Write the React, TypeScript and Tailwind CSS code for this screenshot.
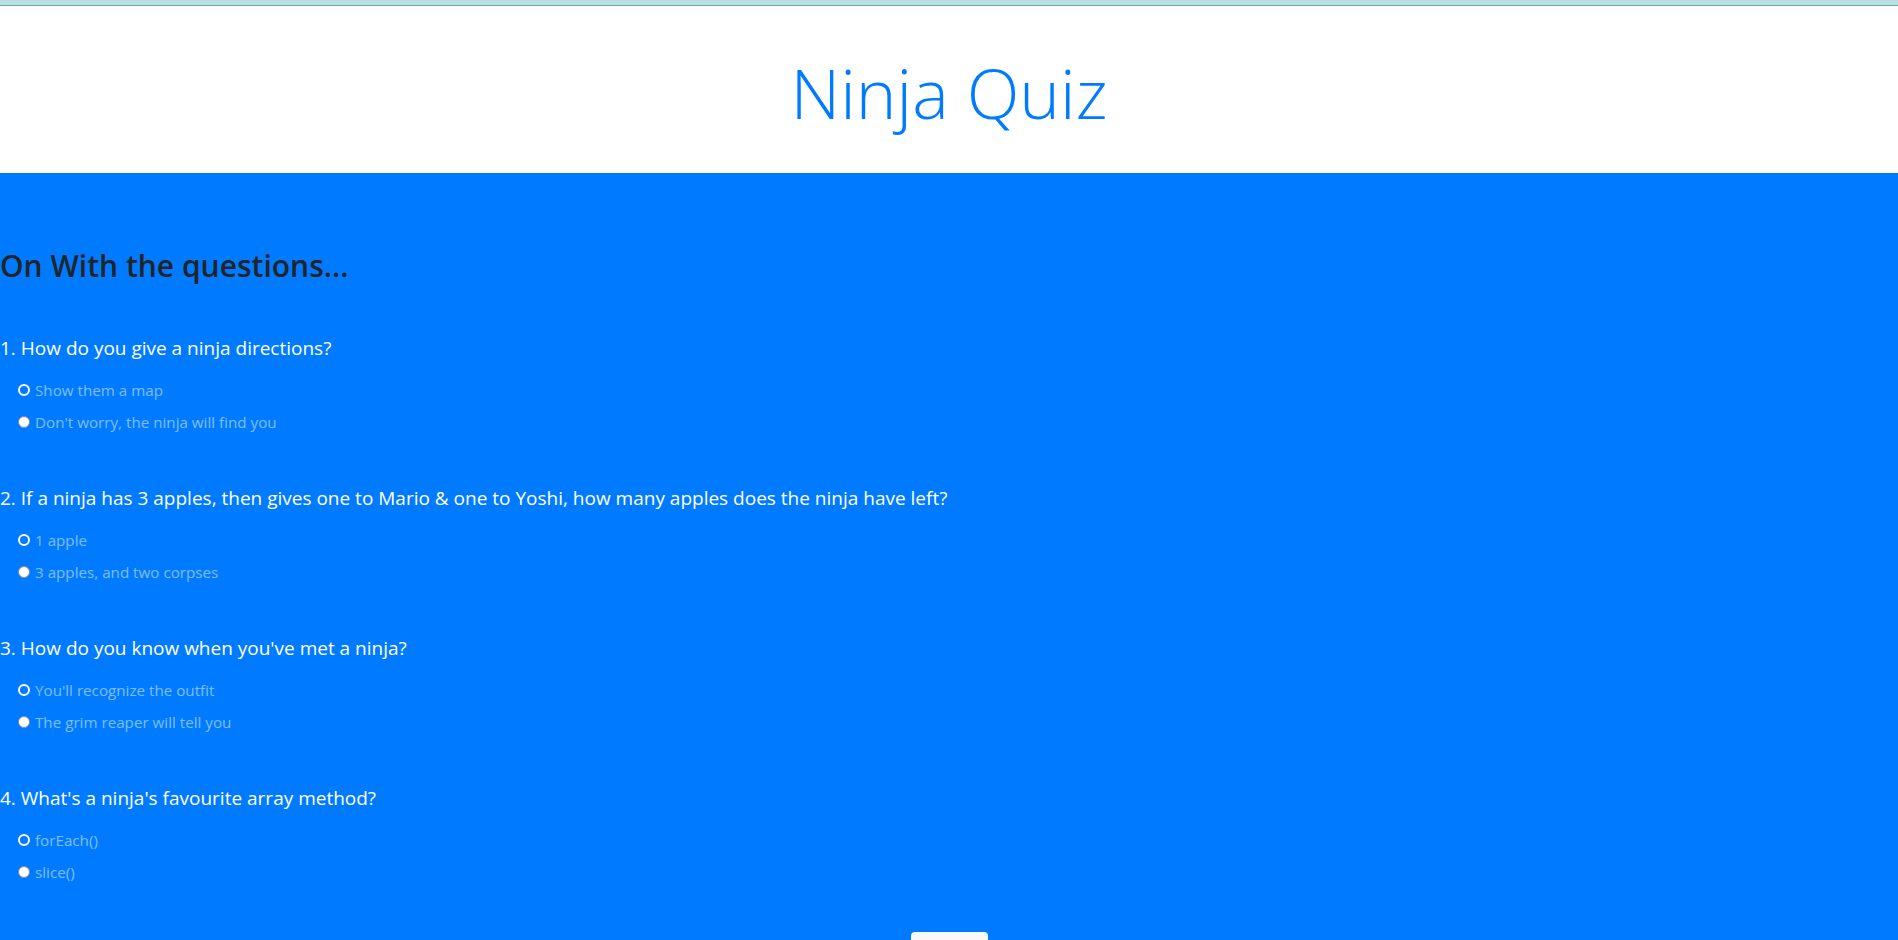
import React from "react";

type Question = {
  text: string;
  answers: string[];
};

const questions: Question[] = [
  {
    text: "1. How do you give a ninja directions?",
    answers: ["Show them a map", "Don't worry, the ninja will find you"],
  },
  {
    text: "2. If a ninja has 3 apples, then gives one to Mario & one to Yoshi, how many apples does the ninja have left?",
    answers: ["1 apple", "3 apples, and two corpses"],
  },
  {
    text: "3. How do you know when you've met a ninja?",
    answers: ["You'll recognize the outfit", "The grim reaper will tell you"],
  },
  {
    text: "4. What's a ninja's favourite array method?",
    answers: ["forEach()", "slice()"],
  },
];

function Radio({ checked }: { checked: boolean }) {
  if (checked) {
    return <span className="block h-[12px] w-[12px] shrink-0 rounded-full border-[2px] border-white bg-[#007bff]" />;
  }
  return <span className="block h-[12px] w-[12px] shrink-0 rounded-full border border-[#8a8a8a] bg-white" />;
}

function QuestionBlock({ q }: { q: Question }) {
  return (
    <div className="mb-[44px]">
      <p className="pt-[2px] text-[19px] leading-[28px] text-white">{q.text}</p>
      <div className="mt-[12px]">
        {q.answers.map((a, i) => (
          <label key={a} className="flex h-[32px] items-center gap-[5px] pl-[18px] text-[15.2px] text-white/50">
            <Radio checked={i === 0} />
            <span>{a}</span>
          </label>
        ))}
      </div>
    </div>
  );
}

export default function App() {
  return (
    <div className="min-h-screen bg-[#007bff] font-['Open_Sans',sans-serif]">
      <div className="h-[6px] border-b border-[#7fa5a8] bg-[#b8e0e4]" />
      <header className="bg-white pb-[38px] pt-[43px] text-center">
        <h1 className="text-[69px] font-light leading-[86px] text-[#007bff]">Ninja Quiz</h1>
      </header>

      <section className="bg-[#007bff] pt-[73px]">
        <h2 className="mb-[46px] text-[30px] font-semibold leading-[40px] text-[#212529]">On With the questions...</h2>
        <form>
          {questions.map((q, idx) => (
            <QuestionBlock key={idx} q={q} />
          ))}
          <div className="flex justify-center">
            <button type="button" className="h-[38px] w-[77px] rounded-[4px] bg-[#f8f9fa] text-[16px] text-[#212529]">
              Submit
            </button>
          </div>
        </form>
      </section>
    </div>
  );
}
